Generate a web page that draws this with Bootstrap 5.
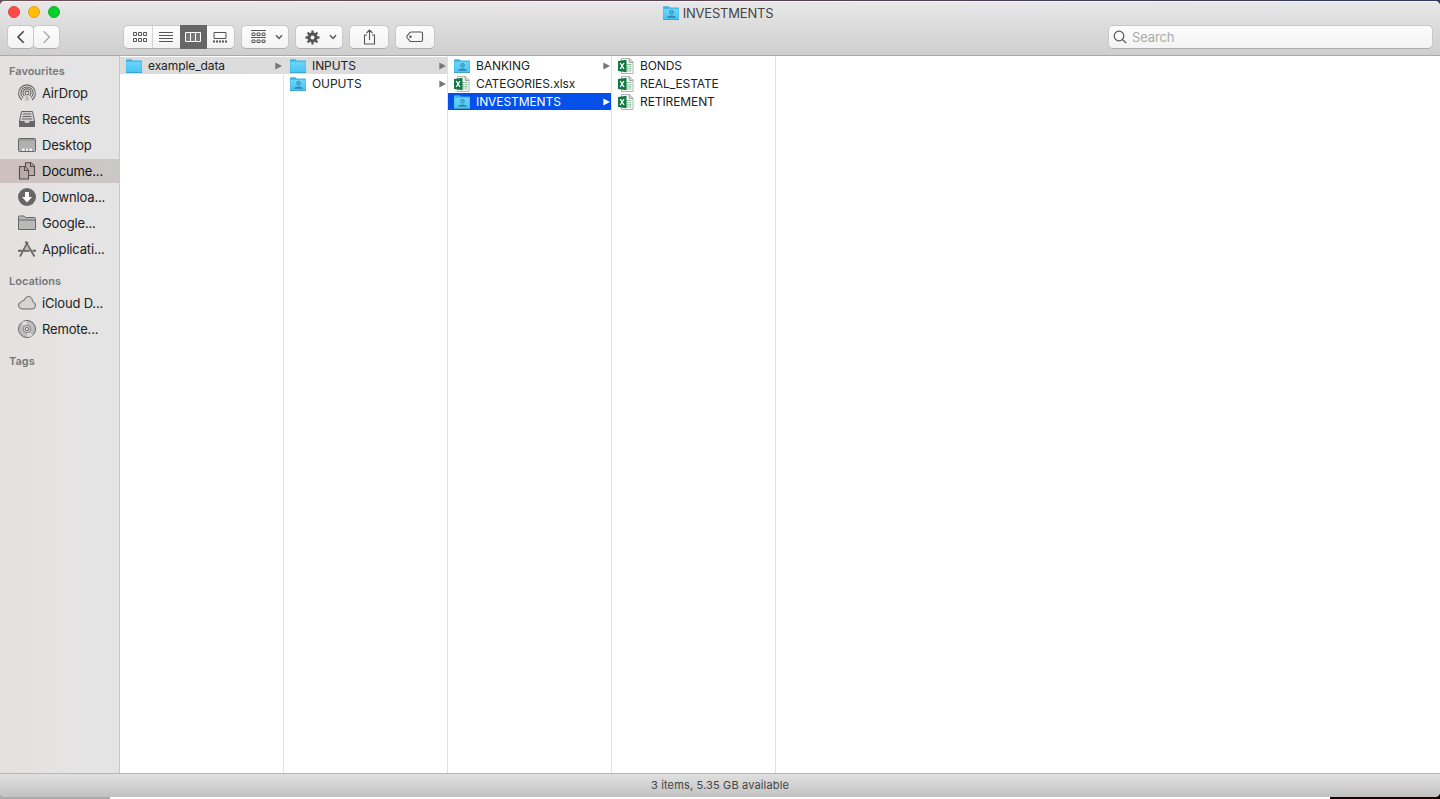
<!DOCTYPE html>
<html lang="en">
<head>
<meta charset="utf-8">
<title>INVESTMENTS</title>
<link href="https://cdn.jsdelivr.net/npm/bootstrap@5.3.0/dist/css/bootstrap.min.css" rel="stylesheet">
<style>
html,body{height:100%}
body{font-family:Inter,"Liberation Sans",sans-serif;font-size:12px;color:#222;background:linear-gradient(90deg,#6e5058,#584453 50%,#33395c);overflow:hidden;line-height:18px}
svg{display:block;flex:none}
.desk{height:799px;padding-top:1px;position:relative}
.under{position:absolute;bottom:0;left:0;right:0;height:14px;background:linear-gradient(90deg,#aaa 110px,#fff 110px 1330px,#180305 1330px)}
.win{height:796px;border-radius:5px;overflow:hidden;position:relative;background:#fff}
.shade{box-shadow:0 1px 0 #777}
.bar{height:55px;background:linear-gradient(#e8e8e8,#cecece);border-bottom:1px solid #a9a9a9;border-top:1px solid #f4f4f4}
.titlebar{height:21px;font-size:13px;color:#444;padding-right:4px;letter-spacing:-.2px}
.lights{position:absolute;left:8px;top:5px;gap:8px}
.lights i{width:12px;height:12px;border-radius:50%;border:1px solid #e2443f;background:#ff4b47}
.lights i:nth-child(2){background:#ffbd04;border-color:#dfa023}
.lights i:nth-child(3){background:#00d02c;border-color:#1bad2c}
.tools{padding:2px 7px 0 7px}
.tb{height:24px;background:linear-gradient(#fdfdfd,#f3f3f3);border:1px solid #c8c8c8;border-bottom-color:#adadad;border-radius:5px;color:#555;padding:0}
.tb>span{height:22px;display:flex;align-items:center;justify-content:center}
.tb>span+span{border-left:1px solid #d4d4d4}
.tb>span.on{background:#666;color:#fff;border-color:#666;height:24px;margin:-1px 0}
.find{width:325px;height:24px;color:#aaa;font-size:13px}
.side{width:120px;border-right:1px solid #c6c6c6;background:linear-gradient(90deg,#e4e1e0,#e5e4e4 70%);padding-top:6px}
.side h6{font-size:11px;font-weight:600;color:#777;margin:0 0 1px 9px;line-height:18px;height:18px;letter-spacing:0}
.side a{display:flex;align-items:center;height:24px;margin-bottom:2px;padding-left:17px;gap:5px;font-size:13px;color:#262626;text-decoration:none;white-space:nowrap;letter-spacing:-.17px}
.side a svg{color:#666}
.side a.on{background:linear-gradient(90deg,#cdc0be,#cbc8c7);color:#111}
.side .grp{margin-top:11px}
.colm{width:164px;border-right:1px solid #e1e1e1;padding-top:1px}
.it{height:17px;margin-bottom:1px;padding-left:6px;padding-right:1px;line-height:17px;letter-spacing:-.09px}
.it .nm{margin-left:6px}
.it .ar{margin-left:auto;color:#777}
.it.gr{background:#dcdcdc}
.it.bl{background:#0650ea;color:#fff}
.it.bl .ar{color:#fff}
.foot{height:24px;border-top:1px solid #b5b5b5;background:linear-gradient(#e0e0e0,#c2c2c2);font-size:11px;color:#444;letter-spacing:.15px;padding-bottom:1px}
</style>
</head>
<body>
<svg width="0" height="0" class="position-absolute">
<defs>
<linearGradient id="fg" x2="0" y2="1"><stop stop-color="#6bd5fb"/><stop offset="1" stop-color="#4bc4f3"/></linearGradient>
<symbol id="fold" viewBox="0 0 16 14"><path d="M0 13.500V1.200Q0 .3 1 .3H5.300Q6 .3 6.300 1L6.700 1.600H15Q16 1.600 16 2.500V13.500Z" fill="#3db3e2"/><path d="M.4 2.800H15.600V13.300H.4Z" fill="url(#fg)"/><path d="M0 13.500H16" stroke="#329fcb" stroke-width=".9"/></symbol>
<symbol id="foldp" viewBox="0 0 16 14"><use href="#fold"/><circle cx="8.500" cy="6.200" r="1.800" fill="#58b9e2" stroke="#317fa8" stroke-width=".9"/><path d="M4 11.700Q4.300 9.600 8.500 9.400Q12.700 9.600 13 11.700Z" fill="#2f85b3"/></symbol>
<symbol id="xl" viewBox="0 0 16 16"><path d="M3.500 .5H11.500L15 4V15.500H3.500Z" fill="#fdfdfd" stroke="#aaa" stroke-width=".9"/><path d="M11.200.6V4.400H15" fill="#ddd" stroke="#888" stroke-width=".8"/><path d="M8.500 6.500H13.500M8.500 8.700H13.500M8.500 10.900H13.500M8.500 13H13.500" stroke="#64bd78" stroke-width="1.100" stroke-dasharray="2.100 .6"/><path d="M0 3L8.500 1.800V14.200L0 13Z" fill="#117844"/><path d="M2.200 5L6 11M6 5L2.200 11" stroke="#fff" stroke-width="1.350"/></symbol>
<symbol id="tri" viewBox="0 0 7 8"><path d="M.3.500L7 4L.3 7.500Z" fill="currentColor"/></symbol>
<symbol id="chev" viewBox="0 0 8 6"><path d="M1 1.300L4 4.400L7 1.300" fill="none" stroke="currentColor" stroke-width="1.400"/></symbol>
</defs></svg>
<div class="desk"><div class="under"></div><div class="shade rounded-2">
<div class="win d-flex flex-column">
<header class="bar">
 <div class="lights d-flex"><i></i><i></i><i></i></div>
 <div class="titlebar d-flex align-items-center justify-content-center"><svg width="16" height="14" class="me-1"><use href="#foldp"/></svg><span>INVESTMENTS</span></div>
 <div class="tools d-flex align-items-center">
  <div class="tb" style="width:27px"><span><svg width="10" height="14" fill="none" stroke="#444" stroke-width="1.600"><path d="M7.700 1.200L2 7L7.700 12.800"/></svg></span></div>
  <div class="tb" style="width:27px;margin-left:-1px"><span><svg width="10" height="14" fill="none" stroke="#aaa" stroke-width="1.400"><path d="M1.700 1.200L7.400 7L1.700 12.800"/></svg></span></div>
  <div class="tb d-flex" style="width:112px;margin-left:63px">
   <span style="width:28px"><svg width="16" height="12" class="ms-1" fill="none" stroke="currentColor" stroke-width="1"><path d="M1.500 1.500h3v3h-3zM6.500 1.500h3v3h-3zM11.500 1.500h3v3h-3zM1.500 7.500h3v3h-3zM6.500 7.500h3v3h-3zM11.500 7.500h3v3h-3z"/></svg></span>
   <span style="width:28px;padding-right:2px"><svg width="14" height="12" stroke="currentColor"><path d="M0 1.500H14M0 4.500H14M0 7.500H14M0 10.500H14"/></svg></span>
   <span class="on" style="width:27px;padding-right:2px"><svg width="16" height="10" fill="#777" stroke="#fff"><path d="M.5.500H15.500V9.500H.5ZM5.500.500V9.500M10.500.500V9.500"/></svg></span>
   <span class="border-0" style="width:27px;padding-right:2px"><svg width="14" height="11" fill="none" stroke="currentColor"><path d="M1 .5H13V6.500H1Z"/><path d="M0 9.500H14" stroke-width="2" stroke-dasharray="2 1"/></svg></span>
  </div>
  <div class="tb" style="width:48px;margin-left:6px"><span style="gap:9px;padding-left:4px"><svg width="15" height="14" fill="none" stroke="currentColor"><path d="M0 .5H15M0 7.500H15M1 3h3v2.500h-3zM6 3h3v2.500h-3zM11 3h3v2.500h-3zM1 10h3v2.500h-3zM6 10h3v2.500h-3zM11 10h3v2.500h-3z"/></svg><svg width="8" height="6"><use href="#chev"/></svg></span></div>
  <div class="tb" style="width:48px;margin-left:6px"><span style="gap:9px;padding-left:4px"><svg width="15" height="15" viewBox="-7.500 -7.500 15 15" fill="none" stroke="currentColor"><circle r="3.500" stroke-width="3"/><path stroke-width="2.300" d="M0-4V-7M0 4V7M-4 0H-7M4 0H7M-3-3L-4.900-4.900M3-3L4.900-4.900M-3 3L-4.900 4.900M3 3L4.900 4.900"/></svg><svg width="8" height="6"><use href="#chev"/></svg></span></div>
  <div class="tb" style="width:40px;margin-left:6px"><span><svg width="13" height="16" fill="none" stroke="currentColor" stroke-width="1.100"><path d="M4 6H1.500V15H11.500V6H9M6.500 11V1.200M3.500 4L6.500 1L9.500 4"/></svg></span></div>
  <div class="tb" style="width:40px;margin-left:6px"><span><svg width="18" height="12" fill="none" stroke="currentColor" stroke-width="1.100"><path d="M5.300 1H15Q16.500 1 16.500 2.500V9Q16.500 10.500 15 10.500H5.300Q4.500 10.500 3.800 9.800L1.300 7Q.4 5.800 1.300 4.600L3.800 1.700Q4.500 1 5.300 1Z"/><circle cx="4.500" cy="5.800" r=".7"/></svg></span></div>
  <div class="tb find ms-auto d-flex align-items-center"><svg width="14" height="14" class="ms-1" fill="none" stroke="#555" stroke-width="1.200"><circle cx="6" cy="6" r="4.800"/><path d="M9.500 9.500L13.200 13.200"/></svg><div style="margin-left:5px;letter-spacing:-.15px">Search</div></div>
 </div>
</header>
<main class="d-flex flex-grow-1">
 <nav class="side flex-shrink-0">
  <h6>Favourites</h6>
  <a><svg width="20" height="20" fill="none" stroke="currentColor" stroke-width="1.100"><path d="M5 17A8.400 8.400 0 1 1 15 17M6.200 14.800A6.100 6.100 0 1 1 13.800 14.800M7.500 13A4 4 0 1 1 12.500 13"/><circle cx="10" cy="10" r="1.900"/><path d="M10 11L7.300 17.500H12.700Z" fill="#bbb" stroke="none"/></svg>AirDrop</a>
  <a><svg width="20" height="20" fill="none" stroke="currentColor"><path d="M4.500 2.500H15.500L17.500 12V17.500H2.500V12Z" fill="#d0d0d0"/><path d="M2.500 12.500H7L8 14.500H12L13 12.500H17.500V17.500H2.500Z" fill="#666"/><path d="M6 5H14M5.500 7.500H14.500M5 10H15"/></svg>Recents</a>
  <a><svg width="20" height="20" fill="#b1b1b1" stroke="currentColor"><rect x="1.500" y="3.500" width="17" height="13" rx="1"/><path d="M2 5H18" stroke="#888"/><path d="M5 13.500H15V16H5Z" fill="#eee" stroke="none"/><path d="M8.300 13.500V16M11.600 13.500V16" stroke="#888"/></svg>Desktop</a>
  <a class="on"><svg width="20" height="20" fill="#b8adab" stroke="#554b49" stroke-width="1.100"><path d="M8.500 1.700H14L17.500 5V14.500H8.500Z"/><path d="M13.500 1.700V5.500H17.500M2.500 5.500H8L11.500 9V18H2.500Z"/><path d="M7.500 5.500V9.500H11.500"/></svg>Docume...</a>
  <a><svg width="20" height="20"><circle cx="10" cy="10" r="9" fill="#666"/><path d="M8 5H12V10H15L10 15.500L5 10H8Z" fill="#fff"/></svg>Downloa...</a>
  <a><svg width="20" height="20" fill="#b9b9b9" stroke="currentColor"><path d="M1.500 16.500V4Q1.500 3 2.500 3H7L8.500 4.500H17.500Q18.500 4.500 18.500 5.500V16.500Z"/><path d="M1.500 7H18.500"/></svg>Google...</a>
  <a><svg width="20" height="20" fill="none" stroke="currentColor" stroke-width="1.800"><path d="M10.800 3L3 17.500M8.500 2.500L17.500 17.500"/><path d="M1 11.800H5M7 11.800H12.500M15.500 11.800H19" stroke-width="2"/><path d="M10 6L7.500 10.500H12.500Z" fill="#bbb" stroke="none"/></svg>Applicati...</a>
  <h6 class="grp">Locations</h6>
  <a><svg width="20" height="20" fill="#d4d4d4" stroke="currentColor"><path d="M5 16Q1.500 15.500 1.500 12.200Q1.500 9.400 4.400 9Q5 6.800 7.200 7.300Q8.300 3.500 11.500 3.500Q15.400 3.800 15.500 8.500Q18.500 9.300 18.500 12.200Q18.300 16 15.500 16Z"/></svg>iCloud D...</a>
  <a><svg width="20" height="20" fill="#bdbdbd" stroke="currentColor"><circle cx="10" cy="10" r="8.500"/><path d="M10 10L4 4A8 8 0 0 1 10 2ZM10 10L16 16A8 8 0 0 1 10 18Z" fill="#d8d8d8" stroke="none"/><circle cx="10" cy="10" r="3.800" fill="#ccc" stroke="#888"/><circle cx="10" cy="10" r="1.600" fill="#eee"/></svg>Remote...</a>
  <h6 class="grp">Tags</h6>
 </nav>
 <section class="colm">
  <div class="it gr d-flex align-items-center"><svg width="16" height="14"><use href="#fold"/></svg><span class="nm">example_data</span><svg class="ar" width="7" height="8"><use href="#tri"/></svg></div>
 </section>
 <section class="colm">
  <div class="it gr d-flex align-items-center"><svg width="16" height="14"><use href="#fold"/></svg><span class="nm">INPUTS</span><svg class="ar" width="7" height="8"><use href="#tri"/></svg></div>
  <div class="it d-flex align-items-center"><svg width="16" height="14"><use href="#foldp"/></svg><span class="nm">OUPUTS</span><svg class="ar" width="7" height="8"><use href="#tri"/></svg></div>
 </section>
 <section class="colm">
  <div class="it d-flex align-items-center"><svg width="16" height="14"><use href="#foldp"/></svg><span class="nm">BANKING</span><svg class="ar" width="7" height="8"><use href="#tri"/></svg></div>
  <div class="it d-flex align-items-center"><svg width="16" height="16"><use href="#xl"/></svg><span class="nm">CATEGORIES.xlsx</span></div>
  <div class="it bl d-flex align-items-center"><svg width="16" height="14"><use href="#foldp"/></svg><span class="nm">INVESTMENTS</span><svg class="ar" width="7" height="8"><use href="#tri"/></svg></div>
 </section>
 <section class="colm">
  <div class="it d-flex align-items-center"><svg width="16" height="16"><use href="#xl"/></svg><span class="nm">BONDS</span></div>
  <div class="it d-flex align-items-center"><svg width="16" height="16"><use href="#xl"/></svg><span class="nm">REAL_ESTATE</span></div>
  <div class="it d-flex align-items-center"><svg width="16" height="16"><use href="#xl"/></svg><span class="nm">RETIREMENT</span></div>
 </section>
</main>
<footer class="foot d-flex align-items-center justify-content-center">3 items, 5.35 GB available</footer>
</div></div></div>
<script src="https://cdn.jsdelivr.net/npm/bootstrap@5.3.0/dist/js/bootstrap.bundle.min.js"></script>
</body>
</html>
